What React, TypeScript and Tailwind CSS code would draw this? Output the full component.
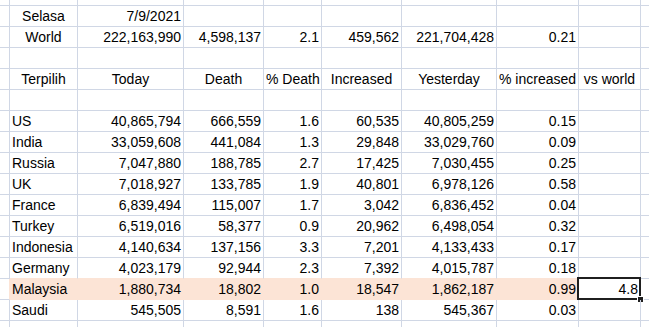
const cols = 'grid grid-cols-[10px_68px_106px_80px_58px_80px_95px_82px_62px_1fr]';

type Row = {
  a?: string;
  vals?: string[];
  header?: boolean;
  hl?: boolean;
  beforeHl?: boolean;
  sel?: string;
};

const rows: Row[] = [
  { a: 'Selasa', vals: ['7/9/2021'] },
  { a: 'World', vals: ['222,163,990', '4,598,137', '2.1', '459,562', '221,704,428', '0.21'] },
  {},
  { a: 'Terpilih', vals: ['Today', 'Death', '% Death', 'Increased', 'Yesterday', '% increased', 'vs world'], header: true },
  {},
  { a: 'US', vals: ['40,865,794', '666,559', '1.6', '60,535', '40,805,259', '0.15'] },
  { a: 'India', vals: ['33,059,608', '441,084', '1.3', '29,848', '33,029,760', '0.09'] },
  { a: 'Russia', vals: ['7,047,880', '188,785', '2.7', '17,425', '7,030,455', '0.25'] },
  { a: 'UK', vals: ['7,018,927', '133,785', '1.9', '40,801', '6,978,126', '0.58'] },
  { a: 'France', vals: ['6,839,494', '115,007', '1.7', '3,042', '6,836,452', '0.04'] },
  { a: 'Turkey', vals: ['6,519,016', '58,377', '0.9', '20,962', '6,498,054', '0.32'] },
  { a: 'Indonesia', vals: ['4,140,634', '137,156', '3.3', '7,201', '4,133,433', '0.17'] },
  { a: 'Germany', vals: ['4,023,179', '92,944', '2.3', '7,392', '4,015,787', '0.18'], beforeHl: true },
  { a: 'Malaysia', vals: ['1,880,734', '18,802', '1.0', '18,547', '1,862,187', '0.99'], hl: true, sel: '4.8' },
  { a: 'Saudi', vals: ['545,505', '8,591', '1.6', '138', '545,367', '0.03'] },
];

function SheetRow({ row }: { row: Row }) {
  const cells: string[] = [];
  for (let i = 0; i < 7; i++) cells.push(row.vals?.[i] ?? '');
  const filled = (i: number) => row.hl && i < 6;
  return (
    <div className={`${cols} h-[21px]`}>
      {/* edge column, its right line is hidden by the fill on the highlighted row */}
      <div
        className={`border-r border-b ${row.hl ? 'border-r-[#fce4d6] border-b-[#d0d7e5]' : 'border-[#d0d7e5]'}`}
      />
      {/* column A */}
      <div
        className={`border-b border-r px-[2px] leading-[20px] whitespace-nowrap ${
          row.header || row.a === 'Selasa' || row.a === 'World' ? 'text-center' : 'text-left'
        } ${row.hl ? 'bg-[#fce4d6] border-[#fce4d6]' : row.beforeHl ? 'border-r-[#d0d7e5] border-b-[#fce4d6]' : 'border-[#d0d7e5]'}`}
      >
        {row.a}
      </div>
      {cells.map((v, i) => {
        const isSel = i === 6 && row.sel;
        return (
          <div
            key={i}
            className={`relative border-b border-r px-[2px] leading-[20px] whitespace-nowrap ${
              row.header ? 'text-center' : 'text-right'
            } ${
              filled(i)
                ? 'bg-[#fce4d6] border-[#fce4d6]'
                : row.beforeHl && i < 6
                  ? 'border-r-[#d0d7e5] border-b-[#fce4d6]'
                  : 'border-[#d0d7e5]'
            }`}
          >
            {isSel ? row.sel : v}
            {isSel && (
              <>
                <div className="absolute -left-[2px] -top-[2px] -right-[1px] -bottom-[1px] border-2 border-[#1f1f1f]" />
                <div className="absolute -right-[3px] -bottom-[3px] h-[5px] w-[5px] bg-[#1f1f1f] outline outline-1 outline-white" />
              </>
            )}
          </div>
        );
      })}
      <div className="border-b border-[#d0d7e5]" />
    </div>
  );
}

function EdgeRow({ h, bottom }: { h: string; bottom?: boolean }) {
  return (
    <div className={`${cols} ${h}`}>
      {Array.from({ length: 10 }).map((_, i) => (
        <div
          key={i}
          className={`${i < 9 ? 'border-r' : ''} ${bottom ? '' : 'border-b'} border-[#d0d7e5]`}
        />
      ))}
    </div>
  );
}

export default function App() {
  return (
    <div className="h-[327px] w-[649px] overflow-hidden bg-white font-['Liberation_Sans',Arial,sans-serif] text-[14px] text-black">
      <EdgeRow h="h-[6px]" />
      {rows.map((r, i) => (
        <SheetRow key={i} row={r} />
      ))}
      <EdgeRow h="h-[10px]" bottom />
    </div>
  );
}
